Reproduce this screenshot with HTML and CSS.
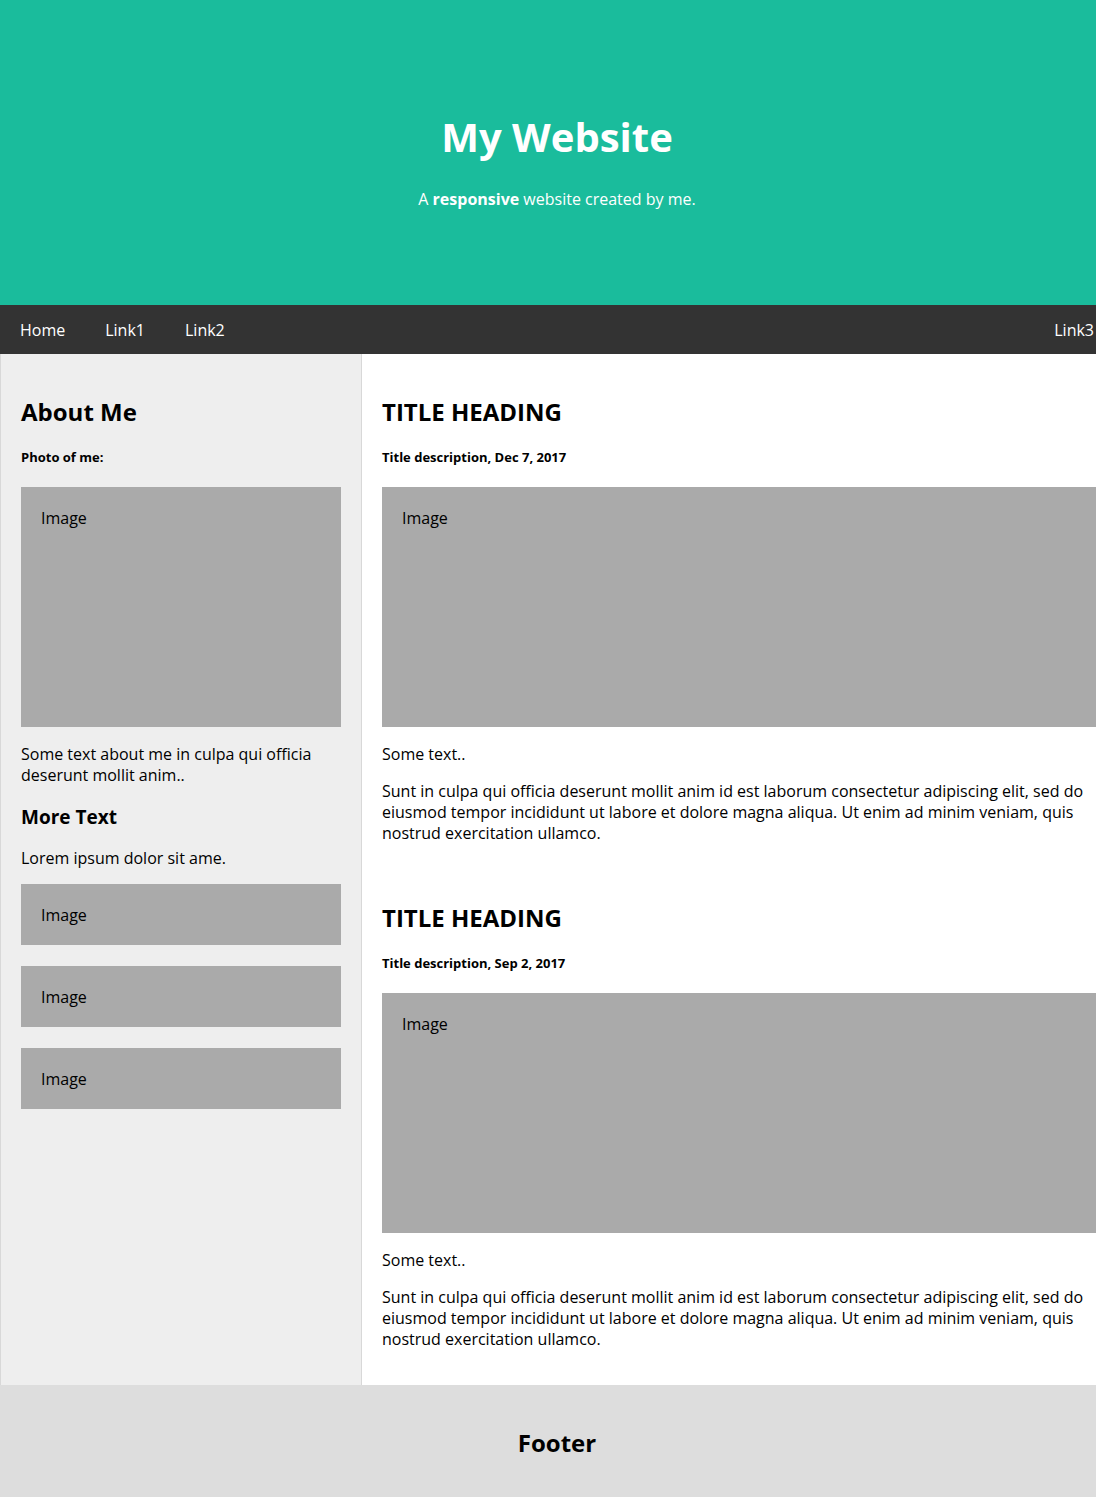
FILE: index.html
```html
<!DOCTYPE html>
<html lang="en">
<head>
<meta charset="utf-8">
<title>My Website</title>
<link rel="stylesheet" href="styles.css">
</head>
<body>
<div class="page">
<header class="header">
  <h1 class="title">My Website</h1>
  <p class="subtitle">A <b>responsive</b> website created by me.</p>
</header>
<nav class="navbar">
  <a class="nav-link" href="#">Home</a>
  <a class="nav-link" href="#">Link1</a>
  <a class="nav-link" href="#">Link2</a>
  <a class="nav-link nav-right" href="#">Link3</a>
</nav>
<div class="row">
  <aside class="side">
    <h2 class="h2">About Me</h2>
    <h5 class="h5">Photo of me:</h5>
    <div class="fakeimg tall">Image</div>
    <p class="text">Some text about me in culpa qui officia deserunt mollit anim..</p>
    <h3 class="h3">More Text</h3>
    <p class="text lorem">Lorem ipsum dolor sit ame.</p>
    <div class="fakeimg small first-small">Image</div>
    <div class="fakeimg small">Image</div>
    <div class="fakeimg small">Image</div>
  </aside>
  <main class="main">
    <section class="post">
      <h2 class="h2">TITLE HEADING</h2>
      <h5 class="h5">Title description, Dec 7, 2017</h5>
      <div class="fakeimg tall">Image</div>
      <p class="text">Some text..</p>
      <p class="text para">Sunt in culpa qui officia deserunt mollit anim id est laborum consectetur adipiscing elit, sed do eiusmod tempor incididunt ut labore et dolore magna aliqua. Ut enim ad minim veniam, quis nostrud exercitation ullamco.</p>
    </section>
    <section class="post second">
      <h2 class="h2">TITLE HEADING</h2>
      <h5 class="h5">Title description, Sep 2, 2017</h5>
      <div class="fakeimg tall">Image</div>
      <p class="text">Some text..</p>
      <p class="text para">Sunt in culpa qui officia deserunt mollit anim id est laborum consectetur adipiscing elit, sed do eiusmod tempor incididunt ut labore et dolore magna aliqua. Ut enim ad minim veniam, quis nostrud exercitation ullamco.</p>
    </section>
  </main>
</div>
<footer class="footer">
  <h2 class="footer-title">Footer</h2>
</footer>
</div>
</body>
</html>
```

FILE: styles.css
```css
* { box-sizing: border-box; }
html, body { margin: 0; padding: 0; }
html { overflow: hidden; }
body {
  font-family: "Open Sans", "Noto Sans", sans-serif;
  color: #000;
  font-size: 16px;
  line-height: 21px;
  background: #fff;
}
.page { width: 1114px; }
.header {
  background: #1abc9c;
  color: #fff;
  text-align: center;
  height: 305px;
  padding-top: 110px;
}
.title {
  margin: 0;
  font-size: 40px;
  line-height: 54px;
  font-weight: 700;
}
.subtitle {
  margin: 25px 0 0;
  font-size: 16px;
  line-height: 21px;
}
.navbar {
  display: flex;
  background: #333;
  height: 49px;
}
.nav-link {
  color: #fff;
  text-decoration: none;
  padding: 15px 20px 13px;
  font-size: 16px;
  line-height: 21px;
}
.nav-right { margin-left: auto; }
.row { display: flex; }
.side {
  width: 362px;
  flex: none;
  background: #eee;
  border-left: 1px solid #d8d8d8;
  border-right: 1px solid #d8d8d8;
  padding: 28px 20px 20px;
}
.main {
  flex: 1;
  padding: 28px 18px 35px 20px;
  min-width: 0;
}
.main .para { padding-right: 2px; }
.h2 {
  margin: 14px 0 0;
  font-size: 24px;
  line-height: 32px;
  font-weight: 700;
}
.h5 {
  margin: 21px 0 0;
  font-size: 13px;
  line-height: 17px;
  font-weight: 700;
}
.h3 {
  margin: 19px 0 0;
  font-size: 19px;
  line-height: 25px;
  font-weight: 700;
}
.text { margin: 17px 0 0; }
.para { margin-top: 16px; }
.lorem { margin-top: 18px; }
.fakeimg {
  background: #aaa;
  padding: 21px 20px 20px;
  margin-top: 21px;
}
.tall { height: 240px; }
.small { height: 61px; margin-top: 21px; }
.first-small { margin-top: 15px; }
.second { margin-top: 58px; }
.footer {
  background: #ddd;
  height: 112px;
  text-align: center;
  padding-top: 43px;
}
.footer-title {
  margin: 0;
  font-size: 24px;
  line-height: 30px;
  font-weight: 700;
}
```
